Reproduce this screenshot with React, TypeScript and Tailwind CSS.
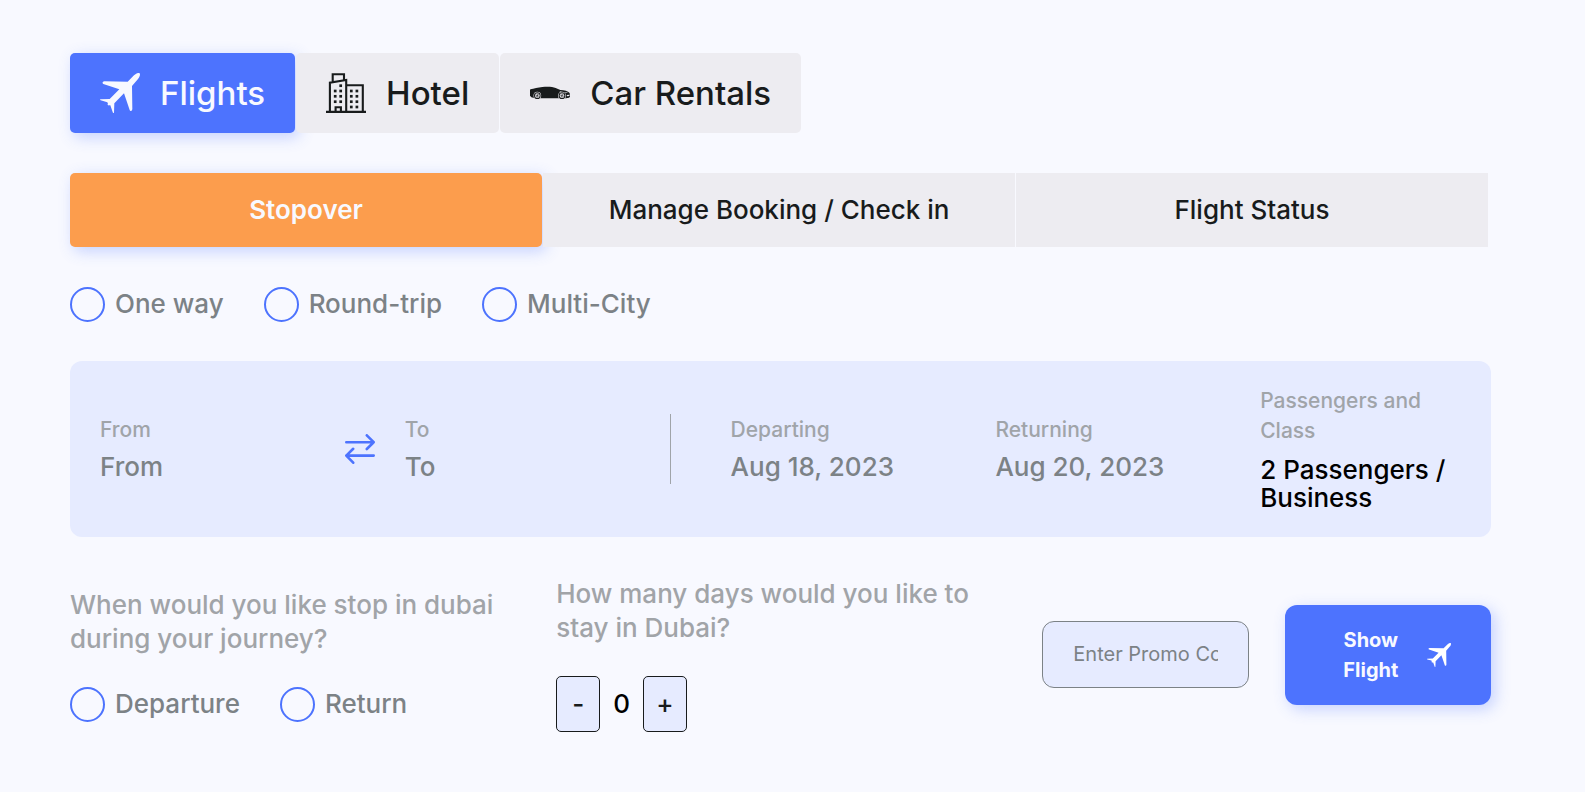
import { useState } from "react";
import type { ReactNode } from "react";

function PlaneIcon({ className }: { className: string }) {
  return (
    <svg viewBox="0 0 120 120" className={className} fill="currentColor" aria-hidden="true">
      <path d="M119 1C121 4 120 11 114 18L96 39L97 108Q97 114 92 114Q90 114 89 111L72 61L43 91L42 119Q39 121 38 117L31 97L27 97Q25 98 24 96Q21 94 24 92L22 88L2 82Q-1 80 1 79L29 78L58 49L10 33Q6 30 9 26Q10 25 13 25L83 26L102 7C109 1 116 -2 119 1Z" />
    </svg>
  );
}

function HotelIcon() {
  const windows = [
    [14.7, 12.7], [9.2, 18], [14.7, 18], [9.2, 23.3], [14.7, 23.3], [9.2, 28.7], [14.7, 28.7],
    [25.3, 18], [30.9, 18], [25.3, 23.3], [30.9, 23.3], [25.3, 28.7], [30.9, 28.7], [25.3, 34], [30.9, 34],
  ];
  return (
    <svg viewBox="0 0 40 40" className="size-10 shrink-0" fill="none" stroke="currentColor" strokeWidth="2.1" aria-hidden="true">
      <path d="M0 38.9H40M3.9 39V9.6L20.2 7V39M20.2 12.2H36.8V39M6.7 9.2V1.3H18V7.4M9.6 39V34.2H14.9V39" />
      <g fill="currentColor" stroke="none">
        {windows.map(([x, y]) => (
          <rect key={`${x}-${y}`} x={x - 1.35} y={y - 1.35} width="2.7" height="2.7" />
        ))}
      </g>
    </svg>
  );
}

function CarIcon() {
  return (
    <svg viewBox="0 0 120 120" className="size-10 shrink-0" fill="currentColor" aria-hidden="true">
      <path d="M1 49C12 47 24 43 37 42C52 40 68 41 77 45L91 51C103 51 114 54 119 60L120 71L117 74L108 76H15L4 73L0 68V52Z" />
      <path d="M90 55L99 58L96 59L89 57ZM105 57L115 60L107 60ZM110 66L118 65V69L111 70Z" fill="#edecf1" />
      {[22, 96].map((x) => (
        <g key={x}>
          <circle cx={x} cy="68" r="11.5" fill="#edecf1" />
          <circle cx={x} cy="68" r="10" />
          <circle cx={x} cy="68" r="7" fill="#edecf1" />
          <path d={`M${x} 62V74M${x - 6} 66L${x + 6} 70M${x - 4} 73L${x + 4} 63`} stroke="currentColor" strokeWidth="1.5" />
        </g>
      ))}
    </svg>
  );
}

function SwapIcon() {
  return (
    <svg viewBox="0 0 30 30" className="size-[30px]" fill="none" stroke="currentColor" strokeWidth="2.6" strokeLinecap="round" strokeLinejoin="round" aria-hidden="true">
      <path d="M1.3 8.2H28.7M21.8 1.3L28.7 8.2L21.8 15M28.7 21.6H1.3M8.2 14.8L1.3 21.6L8.2 28.7" />
    </svg>
  );
}

function CategoryButton({ active, icon, label, onClick }: { active: boolean; icon: ReactNode; label: string; onClick: () => void }) {
  return (
    <button
      type="button"
      aria-pressed={active}
      onClick={onClick}
      className={`flex items-center gap-5 rounded-[5px] px-[30px] py-5 text-[33px] leading-10 font-medium ${
        active ? "bg-[#4d73fe] text-[#f8f9ff] shadow-[4px_4px_15px_rgba(77,115,252,0.3)]" : "bg-[#edecf1] text-[#181b1c]"
      }`}
    >
      {icon}
      {label}
    </button>
  );
}

function Radio({ name, label }: { name: string; label: string }) {
  return (
    <label className="flex h-[34px] items-center gap-2.5 text-[26px] leading-[34px] font-medium text-[#7c8286]">
      <input
        type="radio"
        name={name}
        className="size-[35px] shrink-0 appearance-none rounded-full border-2 border-[#4d73fe] checked:bg-[#4d73fe] checked:shadow-[inset_0_0_0_6px_#f8f9ff]"
      />
      {label}
    </label>
  );
}

const fieldLabelClass = "text-[21px] leading-[30px] text-[#a0a4a9]";

function InputField({ label, placeholder }: { label: string; placeholder: string }) {
  return (
    <label className="flex min-w-0 flex-1 flex-col gap-1.5 font-medium">
      <span className={fieldLabelClass}>{label}</span>
      <input
        type="text"
        placeholder={placeholder}
        className="w-full min-w-0 bg-transparent text-[26px] leading-8 text-[#181b1c] placeholder:text-[#7c8286]"
      />
    </label>
  );
}

const questionClass = "text-[26px] leading-[34px] font-medium text-[#a1a4a8]";
const stepClass = "w-11 rounded-[5px] border border-[#181b1c] bg-[#e6ebff] py-2.5 text-center text-[26px] leading-[34px] font-medium text-[#181b1c]";

export default function App() {
  const [category, setCategory] = useState("Flights");
  const [tab, setTab] = useState("Stopover");
  const [days, setDays] = useState(0);

  const categories = [
    { label: "Flights", icon: <PlaneIcon className="size-10 shrink-0" /> },
    { label: "Hotel", icon: <HotelIcon /> },
    { label: "Car Rentals", icon: <CarIcon /> },
  ];

  return (
    <main className="flex min-h-screen flex-col gap-10 bg-[#f8f9ff] pt-[53px] pr-[94px] pb-10 pl-[70px] font-['Inter',sans-serif]">
      <nav className="flex gap-px" aria-label="Category">
        {categories.map((item) => (
          <CategoryButton key={item.label} {...item} active={category === item.label} onClick={() => setCategory(item.label)} />
        ))}
      </nav>

      <div className="flex gap-px pr-[3px]">
        {["Stopover", "Manage Booking / Check in", "Flight Status"].map((label) => (
          <button
            key={label}
            type="button"
            aria-pressed={tab === label}
            onClick={() => setTab(label)}
            className={`flex-1 py-5 text-[26px] leading-[34px] ${
              tab === label
                ? "rounded-[5px] bg-[#fc9d4d] font-semibold text-[#f8f9ff] shadow-[4px_4px_15px_rgba(77,115,252,0.3)]"
                : "bg-[#edecf1] font-medium text-[#181b1c]"
            }`}
          >
            {label}
          </button>
        ))}
      </div>

      <div className="flex gap-10" role="radiogroup" aria-label="Trip type">
        <Radio name="trip" label="One way" />
        <Radio name="trip" label="Round-trip" />
        <Radio name="trip" label="Multi-City" />
      </div>

      <section className="flex items-center rounded-xl bg-[#e6ebff] py-[25px] pr-[26px] pl-[30px]">
        <InputField label="From" placeholder="From" />
        <button type="button" aria-label="Swap origin and destination" className="mr-[30px] ml-10 text-[#4d73fe]">
          <SwapIcon />
        </button>
        <InputField label="To" placeholder="To" />
        <div className="mx-[60px] h-[70px] w-px bg-[#a0a4a9]" />
        <div className="flex flex-[3_1_120px] items-center gap-[60px]">
          <InputField label="Departing" placeholder="Aug 18, 2023" />
          <InputField label="Returning" placeholder="Aug 20, 2023" />
          <div className="flex min-w-0 flex-1 flex-col gap-2.5 font-medium">
            <span className={fieldLabelClass}>Passengers and Class</span>
            <span className="text-[26px] leading-7 text-black">2 Passengers / Business</span>
          </div>
        </div>
      </section>

      <section className="grid grid-cols-[24fr_24fr_11fr_11fr] items-center gap-9">
        <div className="flex flex-col gap-[31px]">
          <p className={questionClass}>When would you like stop in dubai during your journey?</p>
          <div className="flex gap-10" role="radiogroup" aria-label="Stop timing">
            <Radio name="stop" label="Departure" />
            <Radio name="stop" label="Return" />
          </div>
        </div>
        <div className="flex flex-col gap-[31px]">
          <p className={questionClass}>How many days would you like to stay in Dubai?</p>
          <div className="flex items-center gap-[13px]">
            <button type="button" aria-label="Fewer days" className={stepClass} onClick={() => setDays(Math.max(0, days - 1))}>
              -
            </button>
            <output className="text-[26px] leading-[34px] font-medium text-black">{days}</output>
            <button type="button" aria-label="More days" className={stepClass} onClick={() => setDays(days + 1)}>
              +
            </button>
          </div>
        </div>
        <input
          type="text"
          aria-label="Promo code"
          placeholder="Enter Promo Code"
          className="w-full min-w-0 rounded-xl border border-[#7c8286] bg-[#e6ebff] px-[30px] py-5 text-xl leading-[25px] text-[#181b1c] placeholder:text-[#7c8286]"
        />
        <button
          type="submit"
          className="flex items-center gap-2.5 rounded-xl bg-[#4d73fe] px-10 py-5 text-xl leading-[30px] font-bold text-[#f8f9ff] shadow-[4px_4px_15px_rgba(77,115,252,0.3)]"
        >
          <span className="flex-1 text-center">Show Flight</span>
          <PlaneIcon className="size-6 shrink-0 text-white" />
        </button>
      </section>
    </main>
  );
}
